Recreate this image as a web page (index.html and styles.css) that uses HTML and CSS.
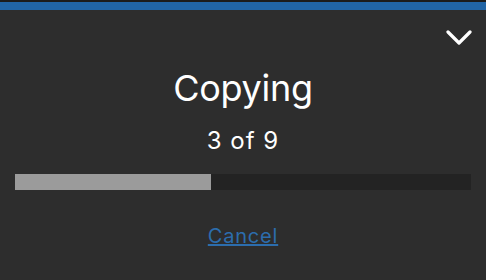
FILE: index.html
```html
<!DOCTYPE html>
<html lang="en">
<head>
    <meta charset="UTF-8">
    <meta name="viewport" content="width=device-width, initial-scale=1.0">
    <title>Copying</title>
    <link rel="stylesheet" href="styles.css">
</head>
<body>
    <div class="top-bar"></div>
    <div class="panel">
        <div class="header">
            <button class="collapse" title="Collapse">
                <svg width="26" height="16" viewBox="0 0 26 16">
                    <path d="M2 2 L13 13 L24 2" fill="none" stroke="#ffffff" stroke-width="3.2" stroke-linecap="round" stroke-linejoin="round"/>
                </svg>
            </button>
        </div>
        <h1 class="title">Copying</h1>
        <div class="count">3 of 9</div>
        <div class="progress">
            <div class="progress-fill" style="width: 43%"></div>
        </div>
        <a href="#" class="cancel">Cancel</a>
    </div>
</body>
</html>
```

FILE: styles.css
```css
body {
    margin: 0;
    background-color: #2d2d2d;
    font-family: Inter, "Noto Sans", sans-serif;
    color: #ffffff;
    height: 280px;
    overflow: hidden;
}
.top-bar {
    height: 8px;
    border-top: 2px solid #1c1c1c;
    background-color: #2165a6;
}
.panel {
    display: flex;
    flex-direction: column;
    align-items: center;
    padding: 0 15px;
}
.header {
    align-self: stretch;
    display: flex;
    justify-content: flex-end;
    height: 24px;
    padding-top: 20px;
}
.collapse {
    background: none;
    border: none;
    padding: 0;
    margin-right: -1px;
    cursor: pointer;
    height: 16px;
}
.title {
    margin: 0;
    margin-top: 12px;
    font-size: 36px;
    font-weight: 400;
    line-height: 44px;
    letter-spacing: -0.3px;
}
.count {
    margin-top: 17px;
    font-size: 24px;
    line-height: 28px;
    letter-spacing: 1px;
}
.progress {
    align-self: stretch;
    height: 16px;
    margin-top: 19px;
    background-color: #232323;
}
.progress-fill {
    height: 100%;
    background-color: #9b9b9b;
}
.cancel {
    margin-top: 34px;
    font-size: 20px;
    color: #2c6dad;
    letter-spacing: 0.8px;
}
```
